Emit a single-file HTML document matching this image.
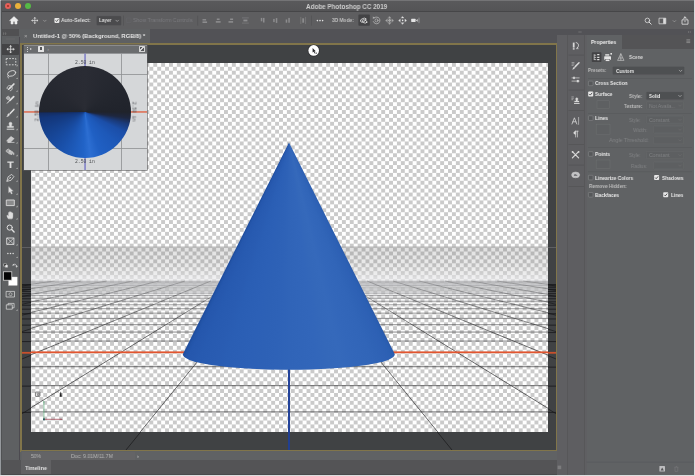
<!DOCTYPE html><html><head><meta charset="utf-8"><title>Adobe Photoshop CC 2019</title><style>
html,body{margin:0;padding:0;}
html{background:#d8d8da;}
body{width:695px;height:476px;overflow:hidden;background:#5e6062;font-family:"Liberation Sans", sans-serif;position:relative;filter:blur(0.5px);}
.a{position:absolute;}
.t{position:absolute;white-space:nowrap;color:#dcdcdc;font-size:6.2px;line-height:8px;will-change:transform;}
.b{font-weight:bold;}
.dim{color:#7a7a7c;}
</style></head><body>
<div class="a" style="left:0;top:0;width:695px;height:11.3px;background:linear-gradient(#5a5a5c,#545456);"></div>
<div class="a" style="left:0;top:0;width:695px;height:1px;background:#747476;"></div>
<div class="a" style="left:0;top:11.2px;width:695px;height:0.8px;background:#464648;"></div>
<div class="a" style="left:5.049999999999999px;top:2.6px;width:6.3px;height:6.3px;border-radius:50%;background:#e4605a;"></div>
<div class="a" style="left:14.950000000000001px;top:2.6px;width:6.3px;height:6.3px;border-radius:50%;background:#eab13a;"></div>
<div class="a" style="left:25.05px;top:2.6px;width:6.3px;height:6.3px;border-radius:50%;background:#56b846;"></div>
<div class="a" style="left:7.2px;top:4.75px;width:2px;height:2px;border-radius:50%;background:#9c2c20;"></div>
<div class="t" style="left:306.40px;top:3.10px;font-size:6.5px;color:#cecece;font-weight:bold;transform:scaleX(0.9733);transform-origin:0 50%;">Adobe Photoshop CC 2019</div>
<div class="a" style="left:0;top:12px;width:695px;height:16.8px;background:#5e5e60;"></div>
<svg class="a" style="left:0;top:0;" width="695" height="30" viewBox="0 0 695 30"><g transform="translate(14,20.4)" fill="none" stroke="#dadada" stroke-width="0.8" stroke-linecap="round" stroke-linejoin="round"><path d="M-4.2,0L0,-3.8L4.2,0H3V3.6H0.9V1.2H-0.9V3.6H-3V0Z" fill="#ececec" stroke="#ececec" stroke-width="0.5"/></g><g transform="translate(34.8,20.5)" fill="none" stroke="#dadada" stroke-width="0.8" stroke-linecap="round" stroke-linejoin="round"><path d="M0,-2.8V2.8M-2.8,0H2.8" stroke-width="0.7"/><path d="M-0.9,-2.3L0,-3.3L0.9,-2.3ZM-0.9,2.3L0,3.3L0.9,2.3ZM-2.3,-0.9L-3.3,0L-2.3,0.9ZM2.3,-0.9L3.3,0L2.3,0.9Z" fill="#dadada" stroke-width="0.25"/></g><g transform="translate(44.8,20.8)" fill="none" stroke="#b0b0b0" stroke-width="0.8" stroke-linecap="round" stroke-linejoin="round"><path d="M-1.3,-0.6L0,0.7L1.3,-0.6" stroke-width="0.6"/></g><rect x="54.4" y="17.9" width="5" height="5" rx="0.8" fill="#e6e6e6"/><path d="M55.5,20.4L56.6,21.5L58.4,19.2" stroke="#444" stroke-width="0.8" fill="none"/><rect x="96.6" y="16" width="24.6" height="9.2" rx="1" fill="#4b4b4d" stroke="#58585a" stroke-width="0.4"/><g transform="translate(117.2,20.8)" fill="none" stroke="#c8c8c8" stroke-width="0.8" stroke-linecap="round" stroke-linejoin="round"><path d="M-1.3,-0.6L0,0.7L1.3,-0.6" stroke-width="0.6"/></g><rect x="123.4" y="15.6" width="0.5" height="10" fill="#4c4c4e"/><rect x="197.6" y="15.6" width="0.5" height="10" fill="#4c4c4e"/><rect x="311.5" y="15.6" width="0.5" height="10" fill="#4c4c4e"/><rect x="126.4" y="18" width="4.6" height="4.6" rx="0.6" fill="none" stroke="#66666a" stroke-width="0.5"/><g transform="translate(204.7,20.5)" fill="none" stroke="#8c8c8e" stroke-width="0.8" stroke-linecap="round" stroke-linejoin="round"><rect x="-2.2" y="-1.4" width="3.6" height="1.4" fill="#8c8c8e" stroke="none"/><rect x="-2.2" y="0.9" width="4.6" height="1.6" fill="#8c8c8e" stroke="none"/></g><g transform="translate(218.2,20.5)" fill="none" stroke="#8c8c8e" stroke-width="0.8" stroke-linecap="round" stroke-linejoin="round"><rect x="-1.4" y="-2" width="2.8" height="1.5" fill="#8c8c8e" stroke="none"/><rect x="-2.4" y="0.6" width="4.8" height="1.6" fill="#8c8c8e" stroke="none"/></g><g transform="translate(230.9,20.5)" fill="none" stroke="#8c8c8e" stroke-width="0.8" stroke-linecap="round" stroke-linejoin="round"><rect x="-0.8" y="-2" width="3" height="1.5" fill="#8c8c8e" stroke="none"/><rect x="-2.4" y="0.6" width="4.6" height="1.6" fill="#8c8c8e" stroke="none"/></g><g transform="translate(245.4,20.5)" fill="none" stroke="#8c8c8e" stroke-width="0.8" stroke-linecap="round" stroke-linejoin="round"><path d="M-3,-2.6H3M-3,2.6H3" stroke-width="0.5"/><rect x="-2" y="-0.9" width="4" height="1.8" fill="#8c8c8e" stroke="none"/></g><g transform="translate(262,20.5)" fill="none" stroke="#8c8c8e" stroke-width="0.8" stroke-linecap="round" stroke-linejoin="round"><rect x="-1.2" y="-2.6" width="1.5" height="3.4" fill="#8c8c8e" stroke="none"/><rect x="1" y="-2.6" width="1.5" height="4.6" fill="#8c8c8e" stroke="none"/></g><g transform="translate(275.2,20.5)" fill="none" stroke="#8c8c8e" stroke-width="0.8" stroke-linecap="round" stroke-linejoin="round"><rect x="-2" y="-1.6" width="1.5" height="3.2" fill="#8c8c8e" stroke="none"/><rect x="0.6" y="-2.4" width="1.5" height="4.8" fill="#8c8c8e" stroke="none"/></g><g transform="translate(287.7,20.5)" fill="none" stroke="#8c8c8e" stroke-width="0.8" stroke-linecap="round" stroke-linejoin="round"><rect x="-2" y="-1" width="1.5" height="3.2" fill="#8c8c8e" stroke="none"/><rect x="0.6" y="-2.6" width="1.5" height="4.8" fill="#8c8c8e" stroke="none"/></g><g transform="translate(303.2,20.5)" fill="none" stroke="#8c8c8e" stroke-width="0.8" stroke-linecap="round" stroke-linejoin="round"><path d="M-2.4,-3.2V3.2M2.4,-3.2V3.2" stroke-width="0.5"/><rect x="-0.9" y="-2.2" width="1.8" height="4.4" fill="#8c8c8e" stroke="none"/></g><circle cx="317.4" cy="20.6" r="0.8" fill="#e0e0e0"/><circle cx="320" cy="20.6" r="0.8" fill="#e0e0e0"/><circle cx="322.6" cy="20.6" r="0.8" fill="#e0e0e0"/><rect x="358.4" y="14.6" width="11.4" height="11.2" rx="0.8" fill="#434345"/><g transform="translate(364,20.4)" fill="none" stroke="#e8e8e8" stroke-width="0.8" stroke-linecap="round" stroke-linejoin="round"><ellipse cx="-0.6" cy="-0.6" rx="3" ry="1.7" transform="rotate(-25)" stroke-width="0.7"/><ellipse cx="0.8" cy="0.8" rx="2.6" ry="1.5" transform="rotate(20)" stroke-width="0.7"/></g><g transform="translate(376.5,20.4)" fill="none" stroke="#c4c4c4" stroke-width="0.8" stroke-linecap="round" stroke-linejoin="round"><path d="M-2.2,-2.6A3.4,3.4 0 1 1 -3.2,1.2" stroke-width="0.7"/><circle cx="0" cy="0" r="1.5" stroke-width="0.6"/><path d="M-3.2,-3.6L-2,-2.4L-3.4,-1.9Z" fill="#c4c4c4" stroke-width="0.2"/></g><g transform="translate(389.6,20.4)" fill="none" stroke="#a8a8a8" stroke-width="0.8" stroke-linecap="round" stroke-linejoin="round"><path d="M0,-4L1.5,-2.2H-1.5ZM0,4L1.5,2.2H-1.5ZM-4,0L-2.2,-1.5V1.5ZM4,0L2.2,-1.5V1.5Z" fill="#a8a8a8" stroke="#a8a8a8" stroke-width="0.3"/><path d="M0,-1.8L1.8,0L0,1.8L-1.8,0Z" fill="#a8a8a8" stroke="none"/></g><g transform="translate(402.6,20.4)" fill="none" stroke="#e4e4e4" stroke-width="0.8" stroke-linecap="round" stroke-linejoin="round"><path d="M0,-3.9L1.3,-2.3H-1.3ZM0,3.9L1.3,2.3H-1.3ZM-3.9,0L-2.3,-1.3V1.3ZM3.9,0L2.3,-1.3V1.3Z" fill="#e4e4e4" stroke="#e4e4e4" stroke-width="0.3"/><circle cx="0" cy="0" r="0.8" fill="#e4e4e4" stroke="none"/></g><g transform="translate(414.6,20.4)" fill="none" stroke="#c0c0c0" stroke-width="0.8" stroke-linecap="round" stroke-linejoin="round"><rect x="-3.4" y="-1.6" width="4.4" height="3.2" rx="0.4" fill="#e4e4e4" stroke="none"/><path d="M1.4,0L3,-1.4V1.4Z" fill="#e4e4e4" stroke="none"/><path d="M4.4,-2.4V2.4" stroke-width="0.5" stroke-dasharray="0.8 0.6"/></g><g transform="translate(648,21)" fill="none" stroke="#dcdcdc" stroke-width="0.8" stroke-linecap="round" stroke-linejoin="round"><circle cx="-0.6" cy="-0.6" r="2.3" stroke-width="0.8"/><path d="M1.1,1.1L3.2,3.2" stroke-width="1"/></g><g transform="translate(662.6,21)" fill="none" stroke="#dcdcdc" stroke-width="0.8" stroke-linecap="round" stroke-linejoin="round"><rect x="-3.2" y="-2.8" width="6.4" height="5.6" stroke-width="0.7"/><rect x="0.6" y="-2.8" width="2.6" height="5.6" fill="#dcdcdc" stroke="none"/></g><g transform="translate(674.4,21.2)" fill="none" stroke="#b0b0b0" stroke-width="0.8" stroke-linecap="round" stroke-linejoin="round"><path d="M-1.3,-0.6L0,0.7L1.3,-0.6" stroke-width="0.6"/></g><g transform="translate(685,20.8)" fill="none" stroke="#e4e4e4" stroke-width="0.8" stroke-linecap="round" stroke-linejoin="round"><path d="M-1.4,-1H-3V3.4H3V-1H1.4" stroke-width="0.8"/><path d="M0,1V-3.8M-1.5,-2.5L0,-4L1.5,-2.5" stroke-width="0.8"/></g></svg>
<div class="t" style="left:61.40px;top:16.40px;font-size:6.0px;color:#dadada;font-weight:bold;transform:scaleX(0.8377);transform-origin:0 50%;">Auto-Select:</div>
<div class="t" style="left:98.60px;top:16.40px;font-size:5.8px;color:#dadada;font-weight:bold;transform:scaleX(0.8012);transform-origin:0 50%;">Layer</div>
<div class="t" style="left:133.00px;top:16.40px;font-size:6.0px;color:#7a7a7e;transform:scaleX(0.8790);transform-origin:0 50%;">Show Transform Controls</div>
<div class="t" style="left:331.90px;top:16.30px;font-size:5.8px;color:#c0c0c0;font-weight:bold;transform:scaleX(0.8314);transform-origin:0 50%;">3D Mode:</div>
<div class="a" style="left:0;top:28.8px;width:695px;height:14.4px;background:#525256;"></div>
<div class="a" style="left:21px;top:29.4px;width:129.3px;height:13.8px;background:#5e6062;"></div>
<div class="t" style="left:33.20px;top:32.20px;font-size:6.1px;color:#e4e4e4;font-weight:bold;transform:scaleX(0.9580);transform-origin:0 50%;">Untitled-1 @ 50% (Background, RGB/8) *</div>
<div class="t" style="left:24px;top:32px;font-size:6px;color:#a8a8a8;">&times;</div>
<div class="a" style="left:0;top:28.8px;width:21px;height:448px;background:#5e6062;"></div>
<div class="a" style="left:0;top:28.8px;width:19.4px;height:7.4px;background:#505052;"></div>
<div class="a" style="left:0.8px;top:43.8px;width:18.4px;height:11.6px;background:#444446;border-radius:1px;"></div>
<div class="a" style="left:19.4px;top:36.6px;width:1px;height:440px;background:#4c4a50;"></div>
<svg class="a" style="left:0;top:0;" width="22" height="476" viewBox="0 0 22 476"><g transform="translate(10.6,49.2) scale(1.0)" fill="none" stroke="#dedede" stroke-width="0.9" stroke-linecap="round" stroke-linejoin="round"><path d="M0,-3.2V3.2M-3.2,0H3.2" stroke-width="0.8"/><path d="M-1,-2.7L0,-3.9L1,-2.7ZM-1,2.7L0,3.9L1,2.7ZM-2.7,-1L-3.9,0L-2.7,1ZM2.7,-1L3.9,0L2.7,1Z" fill="#dedede" stroke-width="0.3"/></g><g transform="translate(11.0,61.7) scale(1.0)" fill="none" stroke="#dedede" stroke-width="0.9" stroke-linecap="round" stroke-linejoin="round"><rect x="-4.8" y="-3.1" width="9.6" height="6.2" stroke-dasharray="1.7 1.3" stroke-width="0.9" stroke-linecap="butt"/></g><g transform="translate(11.3,74.4) scale(1.0)" fill="none" stroke="#dedede" stroke-width="0.9" stroke-linecap="round" stroke-linejoin="round"><ellipse cx="0.6" cy="-0.8" rx="4.2" ry="2.6" transform="rotate(-18)" stroke-width="0.8"/><path d="M-3,0.8C-4,1.8 -3.6,3.2 -2.6,3.8" stroke-width="0.8"/></g><g transform="translate(10.5,87.4) scale(1.0)" fill="none" stroke="#dedede" stroke-width="0.9" stroke-linecap="round" stroke-linejoin="round"><path d="M-3.4,1.2A2.6,2.6 0 1 1 -1,3.4" stroke-dasharray="1.2 0.9" stroke-width="0.8"/><path d="M-1.2,1.2L3.4,-3.4" stroke-width="1.7"/><path d="M-2.4,2.4L-1.2,1.2" stroke-width="1"/></g><g transform="translate(10.5,99.8) scale(1.0)" fill="none" stroke="#dedede" stroke-width="0.9" stroke-linecap="round" stroke-linejoin="round"><path d="M-0.6,0.6L3.2,-3.2" stroke-width="1.8"/><path d="M-3.2,3.4L-1,1" stroke-width="1"/><path d="M-3.8,-2.6L-2.2,-3.6L-0.8,-2.6V-1L-2.2,0L-3.8,-1Z" stroke-width="0.6" fill="#dedede" fill-opacity="0.6"/></g><g transform="translate(10.5,113) scale(1.0)" fill="none" stroke="#dedede" stroke-width="0.9" stroke-linecap="round" stroke-linejoin="round"><path d="M-0.4,0.4L3.4,-3.6" stroke-width="1.5"/><path d="M-3.4,3.6C-2.8,3.6 -1.2,3 -0.9,1.6C-0.9,0.8 -1.6,0.4 -2.2,0.8C-3,1.4 -2.6,2.8 -3.4,3.6Z" fill="#dedede" stroke-width="0.4"/></g><g transform="translate(10.5,125.8) scale(1.0)" fill="none" stroke="#dedede" stroke-width="0.9" stroke-linecap="round" stroke-linejoin="round"><path d="M-3.4,3.4H3.4" stroke-width="1"/><path d="M-3,1.6H3V0.4H1V-0.8C1.8,-1.4 1.8,-3.6 0,-3.6C-1.8,-3.6 -1.8,-1.4 -1,-0.8V0.4H-3Z" fill="#dedede" stroke-width="0.4"/></g><g transform="translate(10.5,139.2) scale(1.0)" fill="none" stroke="#dedede" stroke-width="0.9" stroke-linecap="round" stroke-linejoin="round"><path d="M-3.6,1.4L0.4,-2.8L3.6,-0.6L0,3H-2.4Z" fill="#dedede" fill-opacity="0.85" stroke-width="0.5"/><path d="M-2.6,3.2H3.6" stroke-width="0.7"/></g><g transform="translate(10.5,151.8) scale(1.0)" fill="none" stroke="#dedede" stroke-width="0.9" stroke-linecap="round" stroke-linejoin="round"><path d="M-4,-1.6L-2.2,-2.8L-0.6,-1.6V0L-2.2,1L-4,0Z" stroke-width="0.6" fill="#dedede" fill-opacity="0.5"/><path d="M-0.4,-1.4L2.4,0.2L1.4,2.8L-1.4,2Z" fill="#dedede" fill-opacity="0.75" stroke-width="0.6"/><path d="M3.2,1C3.9,2 3.9,2.8 3.2,3C2.5,2.8 2.5,2 3.2,1Z" fill="#dedede" stroke-width="0.3"/></g><g transform="translate(10.5,164.6) scale(1.0)" fill="none" stroke="#dedede" stroke-width="0.9" stroke-linecap="round" stroke-linejoin="round"><path d="M-3.2,-3.2H3.2V-1.8H0.9V3.4H-0.9V-1.8H-3.2Z" fill="#dedede" stroke="none"/></g><g transform="translate(10.5,177.4) scale(1.0)" fill="none" stroke="#dedede" stroke-width="0.9" stroke-linecap="round" stroke-linejoin="round"><path d="M-3.6,3.6L-2.4,-0.6L1.2,-3L3.4,-0.8L0.8,2.6Z" stroke-width="0.8"/><path d="M-3.4,3.4L-0.6,0.6" stroke-width="0.6"/><circle cx="-0.2" cy="0.2" r="0.7" fill="#dedede" stroke="none"/></g><g transform="translate(10.5,190.4) scale(1.0)" fill="none" stroke="#dedede" stroke-width="0.9" stroke-linecap="round" stroke-linejoin="round"><path d="M-1.8,-3.6V2.4L-0.4,1.2L0.8,3.6L1.8,3.1L0.7,0.8L2.4,0.6Z" fill="#dedede" stroke-width="0.3"/></g><g transform="translate(10.5,202.8) scale(1.0)" fill="none" stroke="#dedede" stroke-width="0.9" stroke-linecap="round" stroke-linejoin="round"><rect x="-3.8" y="-2.8" width="7.6" height="5.6" fill="#dedede" fill-opacity="0.35" stroke-width="0.9"/></g><g transform="translate(10.5,215.2) scale(1.0)" fill="none" stroke="#dedede" stroke-width="0.9" stroke-linecap="round" stroke-linejoin="round"><path d="M-2.2,3.6C-3,2.4 -3.8,1 -3.6,0.2C-3,-0.2 -2.4,0.4 -2,1V-2.4C-2,-3.2 -1,-3.2 -1,-2.4V-3.2C-1,-4 0,-4 0,-3.2V-2.8C0.2,-3.6 1.2,-3.4 1.2,-2.6V-2C1.4,-2.6 2.4,-2.4 2.4,-1.6V1.2C2.4,2.4 2,3 1.6,3.6Z" fill="#dedede" stroke-width="0.3"/></g><g transform="translate(10.5,228.4) scale(1.0)" fill="none" stroke="#dedede" stroke-width="0.9" stroke-linecap="round" stroke-linejoin="round"><circle cx="-0.8" cy="-0.8" r="2.6" stroke-width="1"/><path d="M1.2,1.2L3.6,3.6" stroke-width="1.4"/></g><g transform="translate(10.5,241.2) scale(1.0)" fill="none" stroke="#dedede" stroke-width="0.9" stroke-linecap="round" stroke-linejoin="round"><rect x="-3.4" y="-3.2" width="6.8" height="6.4" stroke-width="0.9"/><path d="M-3.4,-3.2L3.4,3.2M3.4,-3.2L-3.4,3.2" stroke-width="0.7"/></g><g transform="translate(10.5,253.6) scale(1.0)" fill="none" stroke="#dedede" stroke-width="0.9" stroke-linecap="round" stroke-linejoin="round"><circle cx="-2.6" cy="0" r="0.75" fill="#dedede" stroke="none"/><circle cx="0" cy="0" r="0.75" fill="#dedede" stroke="none"/><circle cx="2.6" cy="0" r="0.75" fill="#dedede" stroke="none"/></g><g transform="translate(5.7,265.4) scale(1.0)" fill="none" stroke="#dedede" stroke-width="0.9" stroke-linecap="round" stroke-linejoin="round"><rect x="-1.6" y="-1.6" width="2.4" height="2.4" fill="#111" stroke="#e8e8e8" stroke-width="0.5"/><rect x="-0.4" y="-0.4" width="2.4" height="2.4" fill="#f4f4f4" stroke="#999" stroke-width="0.3"/></g><g transform="translate(15.1,265.6) scale(1.0)" fill="none" stroke="#dedede" stroke-width="0.9" stroke-linecap="round" stroke-linejoin="round"><path d="M-1.8,-0.8C-0.6,-2 1.2,-1.6 1.6,0.6" stroke-width="0.7"/><path d="M-2.6,-0.2L-1.9,-1.6L-0.7,-0.6Z M0.8,0.2L2.4,0.4L1.6,1.8Z" fill="#dedede" stroke-width="0.2"/></g><rect x="8.6" y="277" width="8.6" height="8.4" fill="#ffffff" stroke="#d0d0d0" stroke-width="0.4"/><rect x="3.4" y="271.8" width="8.4" height="8.4" fill="#050505" stroke="#e8e8e8" stroke-width="0.7"/><g transform="translate(10.5,294.2) scale(1.0)" fill="none" stroke="#dedede" stroke-width="0.9" stroke-linecap="round" stroke-linejoin="round"><rect x="-4" y="-2.8" width="8" height="5.6" stroke-width="0.7"/><circle cx="0" cy="0" r="1.5" stroke-dasharray="0.8 0.6" stroke-width="0.6"/></g><g transform="translate(10.5,306.4) scale(1.0)" fill="none" stroke="#dedede" stroke-width="0.9" stroke-linecap="round" stroke-linejoin="round"><rect x="-3.8" y="-1.6" width="5.6" height="4.4" stroke-width="0.7"/><path d="M-2.4,-1.6V-3H3.6V1.4H1.8" stroke-width="0.7"/></g>
<path d="M17.6,66.2H16L17.6,64.6Z" fill="#b8b8b8"/>
<path d="M17.6,79.0H16L17.6,77.39999999999999Z" fill="#b8b8b8"/>
<path d="M17.6,91.80000000000001H16L17.6,90.2Z" fill="#b8b8b8"/>
<path d="M17.6,104.2H16L17.6,102.6Z" fill="#b8b8b8"/>
<path d="M17.6,117.4H16L17.6,115.8Z" fill="#b8b8b8"/>
<path d="M17.6,130.2H16L17.6,128.6Z" fill="#b8b8b8"/>
<path d="M17.6,143.6H16L17.6,142.0Z" fill="#b8b8b8"/>
<path d="M17.6,156.20000000000002H16L17.6,154.60000000000002Z" fill="#b8b8b8"/>
<path d="M17.6,169.0H16L17.6,167.4Z" fill="#b8b8b8"/>
<path d="M17.6,181.8H16L17.6,180.20000000000002Z" fill="#b8b8b8"/>
<path d="M17.6,194.8H16L17.6,193.20000000000002Z" fill="#b8b8b8"/>
<path d="M17.6,207.20000000000002H16L17.6,205.60000000000002Z" fill="#b8b8b8"/>
<path d="M17.6,219.6H16L17.6,218.0Z" fill="#b8b8b8"/>
<path d="M17.6,245.6H16L17.6,244.0Z" fill="#b8b8b8"/>
<path d="M17.6,258.0H16L17.6,256.4Z" fill="#b8b8b8"/>
<path d="M17.6,310.79999999999995H16L17.6,309.2Z" fill="#b8b8b8"/>
<path d="M3,32.6L4.2,33.6L3,34.6M5,32.6L6.2,33.6L5,34.6" stroke="#9a9a9a" stroke-width="0.5" fill="none"/>
<rect x="6" y="38.6" width="9" height="0.8" fill="#6a6a6c"/>
</svg>
<div class="a" style="left:20.4px;top:42.6px;width:537.2px;height:408.6px;background:#404244;"></div>
<div class="a" style="left:19.8px;top:42.6px;width:538px;height:409px;border:2.3px solid #81754a;box-sizing:border-box;"></div>
<svg class="a" style="left:22px;top:44.5px;" width="534" height="405.5" viewBox="22 44.5 534 405.5"><rect x="22" y="246.6" width="534" height="0.8" fill="#77777a" fill-opacity="0.7"/><rect x="22" y="283.51" width="534" height="1" fill="#161618" fill-opacity="0.75"/><rect x="22" y="285.02" width="534" height="1" fill="#161618" fill-opacity="0.75"/><rect x="22" y="286.67" width="534" height="1" fill="#161618" fill-opacity="0.75"/><rect x="22" y="288.47" width="534" height="1" fill="#161618" fill-opacity="0.75"/><rect x="22" y="290.45" width="534" height="1" fill="#161618" fill-opacity="0.75"/><rect x="22" y="292.63" width="534" height="1" fill="#161618" fill-opacity="0.75"/><rect x="22" y="295.05" width="534" height="1" fill="#161618" fill-opacity="0.75"/><rect x="22" y="297.76" width="534" height="1" fill="#161618" fill-opacity="0.75"/><rect x="22" y="300.80" width="534" height="1" fill="#161618" fill-opacity="0.75"/><rect x="22" y="304.24" width="534" height="1" fill="#161618" fill-opacity="0.75"/><rect x="22" y="308.17" width="534" height="1" fill="#161618" fill-opacity="0.75"/><rect x="22" y="312.68" width="534" height="1" fill="#161618" fill-opacity="0.75"/><rect x="22" y="317.94" width="534" height="1" fill="#161618" fill-opacity="0.75"/><rect x="22" y="324.14" width="534" height="1" fill="#161618" fill-opacity="0.75"/><rect x="22" y="331.56" width="534" height="1" fill="#161618" fill-opacity="0.75"/><rect x="22" y="340.58" width="534" height="1" fill="#161618" fill-opacity="0.75"/><rect x="22" y="351.81" width="534" height="1" fill="#161618" fill-opacity="0"/><rect x="22" y="366.15" width="534" height="1" fill="#161618" fill-opacity="0.75"/><rect x="22" y="385.11" width="534" height="1" fill="#161618" fill-opacity="0.75"/><rect x="22" y="411.37" width="534" height="1" fill="#161618" fill-opacity="0.75"/><rect x="22" y="351.4" width="534" height="1.8" fill="#c8502c"/><line x1="-47.58" y1="283.5" x2="-1671.96" y2="450" stroke="#161618" stroke-width="0.9" stroke-opacity="0.75"/><line x1="-19.53" y1="283.5" x2="-1508.54" y2="450" stroke="#161618" stroke-width="0.9" stroke-opacity="0.75"/><line x1="8.52" y1="283.5" x2="-1345.13" y2="450" stroke="#161618" stroke-width="0.9" stroke-opacity="0.75"/><line x1="36.56" y1="283.5" x2="-1181.72" y2="450" stroke="#161618" stroke-width="0.9" stroke-opacity="0.75"/><line x1="64.61" y1="283.5" x2="-1018.30" y2="450" stroke="#161618" stroke-width="0.9" stroke-opacity="0.75"/><line x1="92.66" y1="283.5" x2="-854.89" y2="450" stroke="#161618" stroke-width="0.9" stroke-opacity="0.75"/><line x1="120.71" y1="283.5" x2="-691.48" y2="450" stroke="#161618" stroke-width="0.9" stroke-opacity="0.75"/><line x1="148.76" y1="283.5" x2="-528.06" y2="450" stroke="#161618" stroke-width="0.9" stroke-opacity="0.75"/><line x1="176.81" y1="283.5" x2="-364.65" y2="450" stroke="#161618" stroke-width="0.9" stroke-opacity="0.75"/><line x1="204.85" y1="283.5" x2="-201.24" y2="450" stroke="#161618" stroke-width="0.9" stroke-opacity="0.75"/><line x1="232.90" y1="283.5" x2="-37.83" y2="450" stroke="#161618" stroke-width="0.9" stroke-opacity="0.75"/><line x1="260.95" y1="283.5" x2="125.59" y2="450" stroke="#161618" stroke-width="0.9" stroke-opacity="0.75"/><line x1="317.05" y1="283.5" x2="452.41" y2="450" stroke="#161618" stroke-width="0.9" stroke-opacity="0.75"/><line x1="345.10" y1="283.5" x2="615.83" y2="450" stroke="#161618" stroke-width="0.9" stroke-opacity="0.75"/><line x1="373.15" y1="283.5" x2="779.24" y2="450" stroke="#161618" stroke-width="0.9" stroke-opacity="0.75"/><line x1="401.19" y1="283.5" x2="942.65" y2="450" stroke="#161618" stroke-width="0.9" stroke-opacity="0.75"/><line x1="429.24" y1="283.5" x2="1106.07" y2="450" stroke="#161618" stroke-width="0.9" stroke-opacity="0.75"/><line x1="457.29" y1="283.5" x2="1269.48" y2="450" stroke="#161618" stroke-width="0.9" stroke-opacity="0.75"/><line x1="485.34" y1="283.5" x2="1432.89" y2="450" stroke="#161618" stroke-width="0.9" stroke-opacity="0.75"/><line x1="513.39" y1="283.5" x2="1596.30" y2="450" stroke="#161618" stroke-width="0.9" stroke-opacity="0.75"/><line x1="541.44" y1="283.5" x2="1759.72" y2="450" stroke="#161618" stroke-width="0.9" stroke-opacity="0.75"/><line x1="569.48" y1="283.5" x2="1923.13" y2="450" stroke="#161618" stroke-width="0.9" stroke-opacity="0.75"/><line x1="597.53" y1="283.5" x2="2086.54" y2="450" stroke="#161618" stroke-width="0.9" stroke-opacity="0.75"/><line x1="625.58" y1="283.5" x2="2249.96" y2="450" stroke="#161618" stroke-width="0.9" stroke-opacity="0.75"/></svg>
<div class="a" id="canvas" style="left:30.5px;top:62.5px;width:517.5px;height:369.0px;overflow:hidden;background:#fff;">
<svg class="a" style="left:-30.5px;top:-62.5px;" width="695" height="476" viewBox="0 0 695 476">
<defs><pattern id="ck" x="0" y="0" width="7.86" height="7.86" patternUnits="userSpaceOnUse"><rect x="0" y="3.93" width="3.93" height="3.93" fill="#cacaca"/><rect x="3.93" y="0" width="3.93" height="3.93" fill="#cacaca"/></pattern>
<linearGradient id="fog" x1="0" y1="0" x2="0" y2="1"><stop offset="0" stop-color="#404040" stop-opacity="0.16"/><stop offset="0.35" stop-color="#686868" stop-opacity="0.15"/><stop offset="0.58" stop-color="#c0c0c0" stop-opacity="0.28"/><stop offset="0.8" stop-color="#e6e6e8" stop-opacity="0.6"/><stop offset="1" stop-color="#ecedef" stop-opacity="0.9"/></linearGradient>
<linearGradient id="fog2" x1="0" y1="0" x2="0" y2="1"><stop offset="0" stop-color="#ecedef" stop-opacity="0.9"/><stop offset="0.4" stop-color="#ecedef" stop-opacity="0.5"/><stop offset="1" stop-color="#f0f0f0" stop-opacity="0"/></linearGradient>
<linearGradient id="cone" x1="0" y1="0" x2="1" y2="0"><stop offset="0" stop-color="#2152a4"/><stop offset="0.1" stop-color="#2759ac"/><stop offset="0.4" stop-color="#2e61b3"/><stop offset="0.62" stop-color="#3668ba"/><stop offset="0.85" stop-color="#3064b6"/><stop offset="1" stop-color="#2a5db0"/></linearGradient>
</defs>
<rect x="0" y="0" width="695" height="476" fill="url(#ck)"/>
<rect x="0" y="247" width="695" height="38" fill="url(#fog)"/>
<rect x="0" y="285" width="695" height="20" fill="url(#fog2)"/>
<rect x="0" y="246.6" width="695" height="0.8" fill="#a8a8a8"/>
<rect x="0" y="280.74" width="695" height="1.2" fill="#2c2c2e" fill-opacity="0.25"/>
<rect x="0" y="282.02" width="695" height="1.2" fill="#2c2c2e" fill-opacity="0.26"/>
<rect x="0" y="283.41" width="695" height="1.2" fill="#2c2c2e" fill-opacity="0.27"/>
<rect x="0" y="284.92" width="695" height="1.2" fill="#2c2c2e" fill-opacity="0.28"/>
<rect x="0" y="286.57" width="695" height="1.2" fill="#2c2c2e" fill-opacity="0.29"/>
<rect x="0" y="288.37" width="695" height="1.2" fill="#2c2c2e" fill-opacity="0.30"/>
<rect x="0" y="290.35" width="695" height="1.2" fill="#2c2c2e" fill-opacity="0.31"/>
<rect x="0" y="292.53" width="695" height="1.2" fill="#2c2c2e" fill-opacity="0.33"/>
<rect x="0" y="294.95" width="695" height="1.2" fill="#2c2c2e" fill-opacity="0.34"/>
<rect x="0" y="297.66" width="695" height="1.2" fill="#2c2c2e" fill-opacity="0.35"/>
<rect x="0" y="300.70" width="695" height="1.2" fill="#2c2c2e" fill-opacity="0.36"/>
<rect x="0" y="304.14" width="695" height="1.2" fill="#2c2c2e" fill-opacity="0.37"/>
<rect x="0" y="308.07" width="695" height="1.2" fill="#2c2c2e" fill-opacity="0.39"/>
<rect x="0" y="312.58" width="695" height="1.2" fill="#2c2c2e" fill-opacity="0.40"/>
<rect x="0" y="317.84" width="695" height="1.2" fill="#2c2c2e" fill-opacity="0.42"/>
<rect x="0" y="324.04" width="695" height="1.2" fill="#2c2c2e" fill-opacity="0.44"/>
<rect x="0" y="331.46" width="695" height="1.2" fill="#2c2c2e" fill-opacity="0.46"/>
<rect x="0" y="340.48" width="695" height="1.2" fill="#2c2c2e" fill-opacity="0.48"/>
<rect x="0" y="366.05" width="695" height="1.2" fill="#2c2c2e" fill-opacity="0.55"/>
<rect x="0" y="385.01" width="695" height="1.2" fill="#2c2c2e" fill-opacity="0.56"/>
<rect x="0" y="411.27" width="695" height="1.2" fill="#2c2c2e" fill-opacity="0.56"/>
<line x1="2.82" y1="281" x2="-15.06" y2="283" stroke="#2c2c2e" stroke-width="0.9" stroke-opacity="0.27"/>
<line x1="28.84" y1="281" x2="12.58" y2="283" stroke="#2c2c2e" stroke-width="0.9" stroke-opacity="0.27"/>
<line x1="12.58" y1="283" x2="-7.74" y2="285.5" stroke="#2c2c2e" stroke-width="0.9" stroke-opacity="0.31"/>
<line x1="54.86" y1="281" x2="40.22" y2="283" stroke="#2c2c2e" stroke-width="0.9" stroke-opacity="0.27"/>
<line x1="40.22" y1="283" x2="21.93" y2="285.5" stroke="#2c2c2e" stroke-width="0.9" stroke-opacity="0.31"/>
<line x1="21.93" y1="285.5" x2="3.64" y2="288" stroke="#2c2c2e" stroke-width="0.9" stroke-opacity="0.35"/>
<line x1="3.64" y1="288" x2="-32.95" y2="293" stroke="#2c2c2e" stroke-width="0.9" stroke-opacity="0.39"/>
<line x1="80.87" y1="281" x2="67.86" y2="283" stroke="#2c2c2e" stroke-width="0.9" stroke-opacity="0.27"/>
<line x1="67.86" y1="283" x2="51.60" y2="285.5" stroke="#2c2c2e" stroke-width="0.9" stroke-opacity="0.31"/>
<line x1="51.60" y1="285.5" x2="35.34" y2="288" stroke="#2c2c2e" stroke-width="0.9" stroke-opacity="0.35"/>
<line x1="35.34" y1="288" x2="2.82" y2="293" stroke="#2c2c2e" stroke-width="0.9" stroke-opacity="0.39"/>
<line x1="2.82" y1="293" x2="-36.20" y2="299" stroke="#2c2c2e" stroke-width="0.9" stroke-opacity="0.45"/>
<line x1="106.89" y1="281" x2="95.51" y2="283" stroke="#2c2c2e" stroke-width="0.9" stroke-opacity="0.27"/>
<line x1="95.51" y1="283" x2="81.28" y2="285.5" stroke="#2c2c2e" stroke-width="0.9" stroke-opacity="0.31"/>
<line x1="81.28" y1="285.5" x2="67.05" y2="288" stroke="#2c2c2e" stroke-width="0.9" stroke-opacity="0.35"/>
<line x1="67.05" y1="288" x2="38.60" y2="293" stroke="#2c2c2e" stroke-width="0.9" stroke-opacity="0.39"/>
<line x1="38.60" y1="293" x2="4.45" y2="299" stroke="#2c2c2e" stroke-width="0.9" stroke-opacity="0.45"/>
<line x1="4.45" y1="299" x2="-35.39" y2="306" stroke="#2c2c2e" stroke-width="0.9" stroke-opacity="0.51"/>
<line x1="132.90" y1="281" x2="123.15" y2="283" stroke="#2c2c2e" stroke-width="0.9" stroke-opacity="0.27"/>
<line x1="123.15" y1="283" x2="110.95" y2="285.5" stroke="#2c2c2e" stroke-width="0.9" stroke-opacity="0.31"/>
<line x1="110.95" y1="285.5" x2="98.76" y2="288" stroke="#2c2c2e" stroke-width="0.9" stroke-opacity="0.35"/>
<line x1="98.76" y1="288" x2="74.37" y2="293" stroke="#2c2c2e" stroke-width="0.9" stroke-opacity="0.39"/>
<line x1="74.37" y1="293" x2="45.10" y2="299" stroke="#2c2c2e" stroke-width="0.9" stroke-opacity="0.45"/>
<line x1="45.10" y1="299" x2="10.95" y2="306" stroke="#2c2c2e" stroke-width="0.9" stroke-opacity="0.51"/>
<line x1="10.95" y1="306" x2="-28.07" y2="314" stroke="#2c2c2e" stroke-width="0.9" stroke-opacity="0.58"/>
<line x1="158.92" y1="281" x2="150.79" y2="283" stroke="#2c2c2e" stroke-width="0.9" stroke-opacity="0.27"/>
<line x1="150.79" y1="283" x2="140.63" y2="285.5" stroke="#2c2c2e" stroke-width="0.9" stroke-opacity="0.31"/>
<line x1="140.63" y1="285.5" x2="130.47" y2="288" stroke="#2c2c2e" stroke-width="0.9" stroke-opacity="0.35"/>
<line x1="130.47" y1="288" x2="110.14" y2="293" stroke="#2c2c2e" stroke-width="0.9" stroke-opacity="0.39"/>
<line x1="110.14" y1="293" x2="85.75" y2="299" stroke="#2c2c2e" stroke-width="0.9" stroke-opacity="0.45"/>
<line x1="85.75" y1="299" x2="57.30" y2="306" stroke="#2c2c2e" stroke-width="0.9" stroke-opacity="0.51"/>
<line x1="57.30" y1="306" x2="24.78" y2="314" stroke="#2c2c2e" stroke-width="0.9" stroke-opacity="0.58"/>
<line x1="24.78" y1="314" x2="-11.81" y2="323" stroke="#2c2c2e" stroke-width="0.9" stroke-opacity="0.64"/>
<line x1="184.94" y1="281" x2="178.43" y2="283" stroke="#2c2c2e" stroke-width="0.9" stroke-opacity="0.27"/>
<line x1="178.43" y1="283" x2="170.30" y2="285.5" stroke="#2c2c2e" stroke-width="0.9" stroke-opacity="0.31"/>
<line x1="170.30" y1="285.5" x2="162.17" y2="288" stroke="#2c2c2e" stroke-width="0.9" stroke-opacity="0.35"/>
<line x1="162.17" y1="288" x2="145.91" y2="293" stroke="#2c2c2e" stroke-width="0.9" stroke-opacity="0.39"/>
<line x1="145.91" y1="293" x2="126.40" y2="299" stroke="#2c2c2e" stroke-width="0.9" stroke-opacity="0.45"/>
<line x1="126.40" y1="299" x2="103.64" y2="306" stroke="#2c2c2e" stroke-width="0.9" stroke-opacity="0.51"/>
<line x1="103.64" y1="306" x2="77.62" y2="314" stroke="#2c2c2e" stroke-width="0.9" stroke-opacity="0.58"/>
<line x1="77.62" y1="314" x2="48.35" y2="323" stroke="#2c2c2e" stroke-width="0.9" stroke-opacity="0.64"/>
<line x1="48.35" y1="323" x2="15.83" y2="333" stroke="#2c2c2e" stroke-width="0.9" stroke-opacity="0.71"/>
<line x1="15.83" y1="333" x2="-332.13" y2="440" stroke="#2c2c2e" stroke-width="0.9" stroke-opacity="0.78"/>
<line x1="210.95" y1="281" x2="206.07" y2="283" stroke="#2c2c2e" stroke-width="0.9" stroke-opacity="0.27"/>
<line x1="206.07" y1="283" x2="199.98" y2="285.5" stroke="#2c2c2e" stroke-width="0.9" stroke-opacity="0.31"/>
<line x1="199.98" y1="285.5" x2="193.88" y2="288" stroke="#2c2c2e" stroke-width="0.9" stroke-opacity="0.35"/>
<line x1="193.88" y1="288" x2="181.68" y2="293" stroke="#2c2c2e" stroke-width="0.9" stroke-opacity="0.39"/>
<line x1="181.68" y1="293" x2="167.05" y2="299" stroke="#2c2c2e" stroke-width="0.9" stroke-opacity="0.45"/>
<line x1="167.05" y1="299" x2="149.98" y2="306" stroke="#2c2c2e" stroke-width="0.9" stroke-opacity="0.51"/>
<line x1="149.98" y1="306" x2="130.47" y2="314" stroke="#2c2c2e" stroke-width="0.9" stroke-opacity="0.58"/>
<line x1="130.47" y1="314" x2="108.51" y2="323" stroke="#2c2c2e" stroke-width="0.9" stroke-opacity="0.64"/>
<line x1="108.51" y1="323" x2="84.12" y2="333" stroke="#2c2c2e" stroke-width="0.9" stroke-opacity="0.71"/>
<line x1="84.12" y1="333" x2="-176.85" y2="440" stroke="#2c2c2e" stroke-width="0.9" stroke-opacity="0.78"/>
<line x1="236.97" y1="281" x2="233.72" y2="283" stroke="#2c2c2e" stroke-width="0.9" stroke-opacity="0.27"/>
<line x1="233.72" y1="283" x2="229.65" y2="285.5" stroke="#2c2c2e" stroke-width="0.9" stroke-opacity="0.31"/>
<line x1="229.65" y1="285.5" x2="225.59" y2="288" stroke="#2c2c2e" stroke-width="0.9" stroke-opacity="0.35"/>
<line x1="225.59" y1="288" x2="217.46" y2="293" stroke="#2c2c2e" stroke-width="0.9" stroke-opacity="0.39"/>
<line x1="217.46" y1="293" x2="207.70" y2="299" stroke="#2c2c2e" stroke-width="0.9" stroke-opacity="0.45"/>
<line x1="207.70" y1="299" x2="196.32" y2="306" stroke="#2c2c2e" stroke-width="0.9" stroke-opacity="0.51"/>
<line x1="196.32" y1="306" x2="183.31" y2="314" stroke="#2c2c2e" stroke-width="0.9" stroke-opacity="0.58"/>
<line x1="183.31" y1="314" x2="168.68" y2="323" stroke="#2c2c2e" stroke-width="0.9" stroke-opacity="0.64"/>
<line x1="168.68" y1="323" x2="152.42" y2="333" stroke="#2c2c2e" stroke-width="0.9" stroke-opacity="0.71"/>
<line x1="152.42" y1="333" x2="-21.57" y2="440" stroke="#2c2c2e" stroke-width="0.9" stroke-opacity="0.78"/>
<line x1="262.98" y1="281" x2="261.36" y2="283" stroke="#2c2c2e" stroke-width="0.9" stroke-opacity="0.27"/>
<line x1="261.36" y1="283" x2="259.33" y2="285.5" stroke="#2c2c2e" stroke-width="0.9" stroke-opacity="0.31"/>
<line x1="259.33" y1="285.5" x2="257.29" y2="288" stroke="#2c2c2e" stroke-width="0.9" stroke-opacity="0.35"/>
<line x1="257.29" y1="288" x2="253.23" y2="293" stroke="#2c2c2e" stroke-width="0.9" stroke-opacity="0.39"/>
<line x1="253.23" y1="293" x2="248.35" y2="299" stroke="#2c2c2e" stroke-width="0.9" stroke-opacity="0.45"/>
<line x1="248.35" y1="299" x2="242.66" y2="306" stroke="#2c2c2e" stroke-width="0.9" stroke-opacity="0.51"/>
<line x1="242.66" y1="306" x2="236.16" y2="314" stroke="#2c2c2e" stroke-width="0.9" stroke-opacity="0.58"/>
<line x1="236.16" y1="314" x2="228.84" y2="323" stroke="#2c2c2e" stroke-width="0.9" stroke-opacity="0.64"/>
<line x1="228.84" y1="323" x2="220.71" y2="333" stroke="#2c2c2e" stroke-width="0.9" stroke-opacity="0.71"/>
<line x1="220.71" y1="333" x2="133.72" y2="440" stroke="#2c2c2e" stroke-width="0.9" stroke-opacity="0.78"/>
<line x1="315.02" y1="281" x2="316.64" y2="283" stroke="#2c2c2e" stroke-width="0.9" stroke-opacity="0.27"/>
<line x1="316.64" y1="283" x2="318.67" y2="285.5" stroke="#2c2c2e" stroke-width="0.9" stroke-opacity="0.31"/>
<line x1="318.67" y1="285.5" x2="320.71" y2="288" stroke="#2c2c2e" stroke-width="0.9" stroke-opacity="0.35"/>
<line x1="320.71" y1="288" x2="324.77" y2="293" stroke="#2c2c2e" stroke-width="0.9" stroke-opacity="0.39"/>
<line x1="324.77" y1="293" x2="329.65" y2="299" stroke="#2c2c2e" stroke-width="0.9" stroke-opacity="0.45"/>
<line x1="329.65" y1="299" x2="335.34" y2="306" stroke="#2c2c2e" stroke-width="0.9" stroke-opacity="0.51"/>
<line x1="335.34" y1="306" x2="341.85" y2="314" stroke="#2c2c2e" stroke-width="0.9" stroke-opacity="0.58"/>
<line x1="341.85" y1="314" x2="349.16" y2="323" stroke="#2c2c2e" stroke-width="0.9" stroke-opacity="0.64"/>
<line x1="349.16" y1="323" x2="357.29" y2="333" stroke="#2c2c2e" stroke-width="0.9" stroke-opacity="0.71"/>
<line x1="357.29" y1="333" x2="444.28" y2="440" stroke="#2c2c2e" stroke-width="0.9" stroke-opacity="0.78"/>
<line x1="341.03" y1="281" x2="344.28" y2="283" stroke="#2c2c2e" stroke-width="0.9" stroke-opacity="0.27"/>
<line x1="344.28" y1="283" x2="348.35" y2="285.5" stroke="#2c2c2e" stroke-width="0.9" stroke-opacity="0.31"/>
<line x1="348.35" y1="285.5" x2="352.41" y2="288" stroke="#2c2c2e" stroke-width="0.9" stroke-opacity="0.35"/>
<line x1="352.41" y1="288" x2="360.54" y2="293" stroke="#2c2c2e" stroke-width="0.9" stroke-opacity="0.39"/>
<line x1="360.54" y1="293" x2="370.30" y2="299" stroke="#2c2c2e" stroke-width="0.9" stroke-opacity="0.45"/>
<line x1="370.30" y1="299" x2="381.68" y2="306" stroke="#2c2c2e" stroke-width="0.9" stroke-opacity="0.51"/>
<line x1="381.68" y1="306" x2="394.69" y2="314" stroke="#2c2c2e" stroke-width="0.9" stroke-opacity="0.58"/>
<line x1="394.69" y1="314" x2="409.32" y2="323" stroke="#2c2c2e" stroke-width="0.9" stroke-opacity="0.64"/>
<line x1="409.32" y1="323" x2="425.58" y2="333" stroke="#2c2c2e" stroke-width="0.9" stroke-opacity="0.71"/>
<line x1="425.58" y1="333" x2="599.57" y2="440" stroke="#2c2c2e" stroke-width="0.9" stroke-opacity="0.78"/>
<line x1="367.05" y1="281" x2="371.93" y2="283" stroke="#2c2c2e" stroke-width="0.9" stroke-opacity="0.27"/>
<line x1="371.93" y1="283" x2="378.02" y2="285.5" stroke="#2c2c2e" stroke-width="0.9" stroke-opacity="0.31"/>
<line x1="378.02" y1="285.5" x2="384.12" y2="288" stroke="#2c2c2e" stroke-width="0.9" stroke-opacity="0.35"/>
<line x1="384.12" y1="288" x2="396.32" y2="293" stroke="#2c2c2e" stroke-width="0.9" stroke-opacity="0.39"/>
<line x1="396.32" y1="293" x2="410.95" y2="299" stroke="#2c2c2e" stroke-width="0.9" stroke-opacity="0.45"/>
<line x1="410.95" y1="299" x2="428.02" y2="306" stroke="#2c2c2e" stroke-width="0.9" stroke-opacity="0.51"/>
<line x1="428.02" y1="306" x2="447.53" y2="314" stroke="#2c2c2e" stroke-width="0.9" stroke-opacity="0.58"/>
<line x1="447.53" y1="314" x2="469.49" y2="323" stroke="#2c2c2e" stroke-width="0.9" stroke-opacity="0.64"/>
<line x1="469.49" y1="323" x2="493.88" y2="333" stroke="#2c2c2e" stroke-width="0.9" stroke-opacity="0.71"/>
<line x1="493.88" y1="333" x2="754.85" y2="440" stroke="#2c2c2e" stroke-width="0.9" stroke-opacity="0.78"/>
<line x1="393.06" y1="281" x2="399.57" y2="283" stroke="#2c2c2e" stroke-width="0.9" stroke-opacity="0.27"/>
<line x1="399.57" y1="283" x2="407.70" y2="285.5" stroke="#2c2c2e" stroke-width="0.9" stroke-opacity="0.31"/>
<line x1="407.70" y1="285.5" x2="415.83" y2="288" stroke="#2c2c2e" stroke-width="0.9" stroke-opacity="0.35"/>
<line x1="415.83" y1="288" x2="432.09" y2="293" stroke="#2c2c2e" stroke-width="0.9" stroke-opacity="0.39"/>
<line x1="432.09" y1="293" x2="451.60" y2="299" stroke="#2c2c2e" stroke-width="0.9" stroke-opacity="0.45"/>
<line x1="451.60" y1="299" x2="474.36" y2="306" stroke="#2c2c2e" stroke-width="0.9" stroke-opacity="0.51"/>
<line x1="474.36" y1="306" x2="500.38" y2="314" stroke="#2c2c2e" stroke-width="0.9" stroke-opacity="0.58"/>
<line x1="500.38" y1="314" x2="529.65" y2="323" stroke="#2c2c2e" stroke-width="0.9" stroke-opacity="0.64"/>
<line x1="529.65" y1="323" x2="562.17" y2="333" stroke="#2c2c2e" stroke-width="0.9" stroke-opacity="0.71"/>
<line x1="562.17" y1="333" x2="910.13" y2="440" stroke="#2c2c2e" stroke-width="0.9" stroke-opacity="0.78"/>
<line x1="419.08" y1="281" x2="427.21" y2="283" stroke="#2c2c2e" stroke-width="0.9" stroke-opacity="0.27"/>
<line x1="427.21" y1="283" x2="437.37" y2="285.5" stroke="#2c2c2e" stroke-width="0.9" stroke-opacity="0.31"/>
<line x1="437.37" y1="285.5" x2="447.53" y2="288" stroke="#2c2c2e" stroke-width="0.9" stroke-opacity="0.35"/>
<line x1="447.53" y1="288" x2="467.86" y2="293" stroke="#2c2c2e" stroke-width="0.9" stroke-opacity="0.39"/>
<line x1="467.86" y1="293" x2="492.25" y2="299" stroke="#2c2c2e" stroke-width="0.9" stroke-opacity="0.45"/>
<line x1="492.25" y1="299" x2="520.70" y2="306" stroke="#2c2c2e" stroke-width="0.9" stroke-opacity="0.51"/>
<line x1="520.70" y1="306" x2="553.22" y2="314" stroke="#2c2c2e" stroke-width="0.9" stroke-opacity="0.58"/>
<line x1="553.22" y1="314" x2="589.81" y2="323" stroke="#2c2c2e" stroke-width="0.9" stroke-opacity="0.64"/>
<line x1="589.81" y1="323" x2="630.46" y2="333" stroke="#2c2c2e" stroke-width="0.9" stroke-opacity="0.71"/>
<line x1="630.46" y1="333" x2="1065.41" y2="440" stroke="#2c2c2e" stroke-width="0.9" stroke-opacity="0.78"/>
<line x1="445.10" y1="281" x2="454.85" y2="283" stroke="#2c2c2e" stroke-width="0.9" stroke-opacity="0.27"/>
<line x1="454.85" y1="283" x2="467.05" y2="285.5" stroke="#2c2c2e" stroke-width="0.9" stroke-opacity="0.31"/>
<line x1="467.05" y1="285.5" x2="479.24" y2="288" stroke="#2c2c2e" stroke-width="0.9" stroke-opacity="0.35"/>
<line x1="479.24" y1="288" x2="503.63" y2="293" stroke="#2c2c2e" stroke-width="0.9" stroke-opacity="0.39"/>
<line x1="503.63" y1="293" x2="532.90" y2="299" stroke="#2c2c2e" stroke-width="0.9" stroke-opacity="0.45"/>
<line x1="532.90" y1="299" x2="567.05" y2="306" stroke="#2c2c2e" stroke-width="0.9" stroke-opacity="0.51"/>
<line x1="567.05" y1="306" x2="606.07" y2="314" stroke="#2c2c2e" stroke-width="0.9" stroke-opacity="0.58"/>
<line x1="606.07" y1="314" x2="649.97" y2="323" stroke="#2c2c2e" stroke-width="0.9" stroke-opacity="0.64"/>
<line x1="649.97" y1="323" x2="698.75" y2="333" stroke="#2c2c2e" stroke-width="0.9" stroke-opacity="0.71"/>
<line x1="471.11" y1="281" x2="482.49" y2="283" stroke="#2c2c2e" stroke-width="0.9" stroke-opacity="0.27"/>
<line x1="482.49" y1="283" x2="496.72" y2="285.5" stroke="#2c2c2e" stroke-width="0.9" stroke-opacity="0.31"/>
<line x1="496.72" y1="285.5" x2="510.95" y2="288" stroke="#2c2c2e" stroke-width="0.9" stroke-opacity="0.35"/>
<line x1="510.95" y1="288" x2="539.40" y2="293" stroke="#2c2c2e" stroke-width="0.9" stroke-opacity="0.39"/>
<line x1="539.40" y1="293" x2="573.55" y2="299" stroke="#2c2c2e" stroke-width="0.9" stroke-opacity="0.45"/>
<line x1="573.55" y1="299" x2="613.39" y2="306" stroke="#2c2c2e" stroke-width="0.9" stroke-opacity="0.51"/>
<line x1="613.39" y1="306" x2="658.91" y2="314" stroke="#2c2c2e" stroke-width="0.9" stroke-opacity="0.58"/>
<line x1="658.91" y1="314" x2="710.13" y2="323" stroke="#2c2c2e" stroke-width="0.9" stroke-opacity="0.64"/>
<line x1="497.13" y1="281" x2="510.14" y2="283" stroke="#2c2c2e" stroke-width="0.9" stroke-opacity="0.27"/>
<line x1="510.14" y1="283" x2="526.40" y2="285.5" stroke="#2c2c2e" stroke-width="0.9" stroke-opacity="0.31"/>
<line x1="526.40" y1="285.5" x2="542.66" y2="288" stroke="#2c2c2e" stroke-width="0.9" stroke-opacity="0.35"/>
<line x1="542.66" y1="288" x2="575.18" y2="293" stroke="#2c2c2e" stroke-width="0.9" stroke-opacity="0.39"/>
<line x1="575.18" y1="293" x2="614.20" y2="299" stroke="#2c2c2e" stroke-width="0.9" stroke-opacity="0.45"/>
<line x1="614.20" y1="299" x2="659.73" y2="306" stroke="#2c2c2e" stroke-width="0.9" stroke-opacity="0.51"/>
<line x1="659.73" y1="306" x2="711.76" y2="314" stroke="#2c2c2e" stroke-width="0.9" stroke-opacity="0.58"/>
<line x1="523.14" y1="281" x2="537.78" y2="283" stroke="#2c2c2e" stroke-width="0.9" stroke-opacity="0.27"/>
<line x1="537.78" y1="283" x2="556.07" y2="285.5" stroke="#2c2c2e" stroke-width="0.9" stroke-opacity="0.31"/>
<line x1="556.07" y1="285.5" x2="574.36" y2="288" stroke="#2c2c2e" stroke-width="0.9" stroke-opacity="0.35"/>
<line x1="574.36" y1="288" x2="610.95" y2="293" stroke="#2c2c2e" stroke-width="0.9" stroke-opacity="0.39"/>
<line x1="610.95" y1="293" x2="654.85" y2="299" stroke="#2c2c2e" stroke-width="0.9" stroke-opacity="0.45"/>
<line x1="654.85" y1="299" x2="706.07" y2="306" stroke="#2c2c2e" stroke-width="0.9" stroke-opacity="0.51"/>
<line x1="549.16" y1="281" x2="565.42" y2="283" stroke="#2c2c2e" stroke-width="0.9" stroke-opacity="0.27"/>
<line x1="565.42" y1="283" x2="585.74" y2="285.5" stroke="#2c2c2e" stroke-width="0.9" stroke-opacity="0.31"/>
<line x1="585.74" y1="285.5" x2="606.07" y2="288" stroke="#2c2c2e" stroke-width="0.9" stroke-opacity="0.35"/>
<line x1="606.07" y1="288" x2="646.72" y2="293" stroke="#2c2c2e" stroke-width="0.9" stroke-opacity="0.39"/>
<line x1="646.72" y1="293" x2="695.50" y2="299" stroke="#2c2c2e" stroke-width="0.9" stroke-opacity="0.45"/>
<line x1="575.18" y1="281" x2="593.06" y2="283" stroke="#2c2c2e" stroke-width="0.9" stroke-opacity="0.27"/>
<line x1="593.06" y1="283" x2="615.42" y2="285.5" stroke="#2c2c2e" stroke-width="0.9" stroke-opacity="0.31"/>
<line x1="615.42" y1="285.5" x2="637.78" y2="288" stroke="#2c2c2e" stroke-width="0.9" stroke-opacity="0.35"/>
<line x1="637.78" y1="288" x2="682.49" y2="293" stroke="#2c2c2e" stroke-width="0.9" stroke-opacity="0.39"/>
<line x1="682.49" y1="293" x2="736.15" y2="299" stroke="#2c2c2e" stroke-width="0.9" stroke-opacity="0.45"/>
<line x1="601.19" y1="281" x2="620.70" y2="283" stroke="#2c2c2e" stroke-width="0.9" stroke-opacity="0.27"/>
<line x1="620.70" y1="283" x2="645.09" y2="285.5" stroke="#2c2c2e" stroke-width="0.9" stroke-opacity="0.31"/>
<line x1="645.09" y1="285.5" x2="669.48" y2="288" stroke="#2c2c2e" stroke-width="0.9" stroke-opacity="0.35"/>
<line x1="669.48" y1="288" x2="718.26" y2="293" stroke="#2c2c2e" stroke-width="0.9" stroke-opacity="0.39"/>
<line x1="627.21" y1="281" x2="648.35" y2="283" stroke="#2c2c2e" stroke-width="0.9" stroke-opacity="0.27"/>
<line x1="648.35" y1="283" x2="674.77" y2="285.5" stroke="#2c2c2e" stroke-width="0.9" stroke-opacity="0.31"/>
<line x1="674.77" y1="285.5" x2="701.19" y2="288" stroke="#2c2c2e" stroke-width="0.9" stroke-opacity="0.35"/>
<line x1="653.22" y1="281" x2="675.99" y2="283" stroke="#2c2c2e" stroke-width="0.9" stroke-opacity="0.27"/>
<line x1="675.99" y1="283" x2="704.44" y2="285.5" stroke="#2c2c2e" stroke-width="0.9" stroke-opacity="0.31"/>
<line x1="679.24" y1="281" x2="703.63" y2="283" stroke="#2c2c2e" stroke-width="0.9" stroke-opacity="0.27"/>
<rect x="0" y="351.4" width="695" height="1.8" fill="#e2552f"/>
<rect x="288" y="352" width="2" height="100" fill="#22429a"/>
</svg>
<div class="a" style="left:0;top:0;width:517.5px;height:369.0px;background:conic-gradient(from 0deg at 258.5px 80.0px,#2656a8 0deg,#2656a8 153.51deg,#2a5db0 153.92deg,#2c60b3 154.71deg,#2e61b5 155.86deg,#2f63b6 157.39deg,#3165b8 159.26deg,#3266b9 161.47deg,#3367ba 164.00deg,#3569bb 166.82deg,#3468ba 169.89deg,#3266ba 173.16deg,#3165b9 176.57deg,#3064b8 180.05deg,#2e62b7 183.53deg,#2d61b6 186.94deg,#2c60b6 190.21deg,#2b5fb5 193.28deg,#2a5eb4 196.09deg,#295cb2 198.62deg,#285bb1 200.83deg,#275ab0 202.70deg,#2658ae 204.22deg,#2557ad 205.38deg,#2254a8 206.17deg,#1f4ea0 206.58deg,#1f4ea0 360deg);clip-path:path('M258.50,80.00 L152.67,291.01 A105.9,15.2 0 1 0 363.93,291.01 Z');"></div>
</div>
<div class="a" style="left:23.8px;top:45.3px;width:123.60000000000001px;height:124.60000000000001px;background:#d5d7d9;overflow:hidden;box-shadow:0 0 0 0.6px #5a5a5c;">
<svg class="a" style="left:-23.8px;top:-45.3px;" width="695" height="476" viewBox="0 0 695 476">
<defs><clipPath id="cc"><circle cx="85" cy="111.8" r="46"/></clipPath>
<linearGradient id="shine" x1="0" y1="0" x2="1" y2="0"><stop offset="0" stop-color="#15306e"/><stop offset="0.35" stop-color="#1f55b4"/><stop offset="0.56" stop-color="#3a78d8"/><stop offset="0.7" stop-color="#2562c6"/><stop offset="1" stop-color="#1a4aa6"/></linearGradient>
<linearGradient id="darktop" x1="0" y1="0" x2="0" y2="1"><stop offset="0" stop-color="#2b2d35"/><stop offset="0.75" stop-color="#20232b"/><stop offset="1" stop-color="#1b2236"/></linearGradient>
</defs>
<rect x="23.8" y="45.3" width="123.60000000000001" height="8.3" fill="#6b6d6f"/>
<rect x="48.0" y="53.6" width="0.8" height="120" fill="#8e9092"/>
<rect x="121.0" y="53.6" width="0.8" height="120" fill="#8e9092"/>
<rect x="20" y="74.19999999999999" width="130" height="0.8" fill="#8e9092"/>
<rect x="20" y="148.2" width="130" height="0.8" fill="#8e9092"/>
<rect x="20" y="111.2" width="130" height="1.5" fill="#df6b4e"/>
<rect x="84.4" y="53.6" width="1.3" height="120" fill="#6f6fc4"/>
</svg>
<div class="a" style="left:15.2px;top:20.5px;width:92px;height:92px;border-radius:50%;background:conic-gradient(from 0deg at 50% 50%,#2a2c34 0deg,#23262e 60deg,#20232b 90deg,#1e2740 98deg,#1a3a7a 106deg,#1b4ea8 117deg,#1d58b8 135deg,#2060c4 160deg,#2c6ed2 173deg,#2163c7 182deg,#194fa8 215deg,#15408c 245deg,#13367a 262deg,#142e64 268deg,#1a2440 270deg,#22252d 270.6deg,#282a32 320deg,#2a2c34 360deg);"></div>
<div class="a" style="left:51.2px;top:14.900000000000006px;font-family:&quot;Liberation Mono&quot;,monospace;font-size:4.7px;color:#4c4e52;line-height:5px;will-change:transform;white-space:nowrap;">2.50&nbsp;in</div>
<div class="a" style="left:51.2px;top:113.50000000000001px;font-family:&quot;Liberation Mono&quot;,monospace;font-size:4.7px;color:#4c4e52;line-height:5px;will-change:transform;white-space:nowrap;">2.50&nbsp;in</div>
<div class="a" style="left:12.8px;top:64.0px;font-family:&quot;Liberation Mono&quot;,monospace;font-size:4.7px;color:#4c4e52;line-height:5px;will-change:transform;white-space:nowrap;transform:rotate(-90deg);transform-origin:center;width:20px;margin-left:-10px;text-align:center;">2.50&nbsp;in</div>
<div class="a" style="left:109.8px;top:64.0px;font-family:&quot;Liberation Mono&quot;,monospace;font-size:4.7px;color:#4c4e52;line-height:5px;will-change:transform;white-space:nowrap;transform:rotate(90deg);transform-origin:center;width:20px;margin-left:-10px;text-align:center;">2.50&nbsp;in</div>
<div class="a" style="left:2.8000000000000007px;top:1.7000000000000028px;width:1.2px;height:5px;background:repeating-linear-gradient(#d0d0d0 0 1px,transparent 1px 2px);"></div>
<div class="a" style="left:6.5px;top:2.3000000000000043px;width:0;height:0;border-left:2.6px solid #dcdcdc;border-top:1.8px solid transparent;border-bottom:1.8px solid transparent;"></div>
<div class="a" style="left:14.2px;top:1.1000000000000014px;width:6px;height:5.8px;background:#e4e4e4;border-radius:0.6px;"></div>
<div class="a" style="left:16.400000000000002px;top:1.9000000000000057px;width:1.6px;height:2.6px;background:#55575a;"></div>
<div class="a" style="left:23.499999999999996px;top:0.9000000000000057px;font-size:5px;line-height:6px;color:#a8a8aa;">&rsaquo;</div>
<div class="a" style="left:115.50000000000001px;top:1.0px;width:6px;height:6px;background:#d4d4d4;border-radius:0.5px;"></div>
<div class="a" style="left:116.50000000000001px;top:2.0px;width:4px;height:4px;background:linear-gradient(135deg,#55575a 0 30%,#d4d4d4 30% 55%,#55575a 55% 100%);"></div>
</div>
<div class="a" style="left:288px;top:431.5px;width:2px;height:18px;background:#213f90;"></div>
<svg class="a" style="left:0;top:0;" width="695" height="476" viewBox="0 0 695 476"><circle cx="313.7" cy="50.5" r="6.2" fill="#2a2a2c" fill-opacity="0.55"/><circle cx="313.7" cy="50.4" r="5.3" fill="#ffffff"/><path d="M312.6,48L312.6,52.6L313.7,51.7L314.5,53.4L315.2,53.1L314.4,51.5L315.8,51.3Z" fill="#2a2a2c"/><rect x="315.4" y="52.4" width="1.6" height="1.6" fill="#8a8a8c"/><g stroke="#3a3a3c" stroke-width="0.6" fill="none"><rect x="35.4" y="392" width="4.6" height="4.4" rx="0.6" fill="#e8e8e8"/><path d="M36.6,393.2H39.2V395.4H37.6V394.2H38.6" stroke-width="0.5"/></g><path d="M60.8,391.4L61.4,393.6L61.8,396.8H59.8L60.2,393.6Z" fill="#1c1c1e"/><path d="M43.9,419.3V401.6" stroke="#6cb486" stroke-width="0.8"/><path d="M43.2,402.4L43.9,400.4L44.6,402.4Z" fill="#6cb486"/><path d="M43.9,419.3H61" stroke="#a44a58" stroke-width="0.8"/><path d="M60.6,418.5L62.9,419.3L60.6,420.1Z" fill="#8a3a48"/><rect x="43" y="418.4" width="1.9" height="1.9" fill="#2a5a5c"/></svg>
<div class="a" style="left:21px;top:451px;width:545px;height:9.5px;background:#606264;"></div>
<div class="a" style="left:21.5px;top:452px;width:28px;height:7.6px;background:#646466;"></div>
<div class="a" style="left:50px;top:452px;width:85px;height:7.6px;background:#646466;"></div>
<div class="t" style="left:31.00px;top:451.70px;font-size:5.6px;color:#b6b6b6;transform:scaleX(0.8922);transform-origin:0 50%;">50%</div>
<div class="t" style="left:71.40px;top:451.70px;font-size:5.6px;color:#b6b6b6;transform:scaleX(0.9241);transform-origin:0 50%;">Doc: 9.01M/11.7M</div>
<div class="t" style="left:136.8px;top:451.5px;font-size:5.6px;color:#c8c8c8;">&rsaquo;</div>
<div class="a" style="left:0;top:460.4px;width:566px;height:15.6px;background:#545456;"></div>
<div class="a" style="left:21.2px;top:460.4px;width:30px;height:14.2px;background:#616163;"></div>
<div class="a" style="left:0;top:474.0px;width:695px;height:0.7px;background:#4a4a4c;"></div>
<div class="t" style="left:25.30px;top:463.50px;font-size:6.1px;color:#e0e0e0;font-weight:bold;transform:scaleX(0.8890);transform-origin:0 50%;">Timeline</div>
<div class="a" style="left:557px;top:28.8px;width:138px;height:448px;background:#5f5f62;"></div>
<div class="a" style="left:557px;top:28.8px;width:138px;height:6.2px;background:#525256;"></div>
<div class="a" style="left:566.6px;top:35px;width:18.6px;height:441px;background:#5e5e61;box-shadow:inset 0.5px 0 0 #505052,inset -0.5px 0 0 #505052;"></div>
<div class="a" style="left:586.5px;top:35px;width:108.5px;height:441px;background:#606264;"></div>
<div class="a" style="left:586.5px;top:35px;width:108.5px;height:13.5px;background:#545456;"></div>
<div class="a" style="left:586.5px;top:35px;width:35px;height:13.5px;background:#606264;"></div>
<div class="t" style="left:591.00px;top:37.60px;font-size:6.1px;color:#ececec;font-weight:bold;transform:scaleX(0.8385);transform-origin:0 50%;">Properties</div>
<svg class="a" style="left:0;top:0;" width="695" height="476" viewBox="0 0 695 476"><path d="M686.4,39.8H690.2M686.4,41.2H690.2M686.4,42.6H690.2" stroke="#a8a8a8" stroke-width="0.6"/><path d="M688,31L689,32L688,33M689.8,31L690.8,32L689.8,33" stroke="#8a8a8a" stroke-width="0.45" fill="none"/><path d="M578.6,31L579.6,32L578.6,33M580.4,31L581.4,32L580.4,33" stroke="#8a8a8a" stroke-width="0.45" fill="none"/><rect x="591.8" y="52.2" width="9.6" height="9.8" rx="0.8" fill="#434345"/><g stroke="#e0e0e0" stroke-width="0.7" fill="none"><path d="M594.2,54.2V60M594.2,55.2H596.2M594.2,57.4H596.2M594.2,59.6H596.2"/><path d="M597.2,54.6H599.4M597.2,57.4H599.4M597.2,59.6H599.4" stroke-width="1.1"/></g><g fill="#e4e4e4"><rect x="604.2" y="56.2" width="6.8" height="3.6" rx="0.6"/><rect x="605.2" y="54.2" width="4" height="1.4"/><rect x="605.4" y="59.2" width="4.4" height="2" fill="#e4e4e4" stroke="#535355" stroke-width="0.4"/><rect x="610.4" y="53" width="1.6" height="1.6"/></g><g stroke="#d0d0d0" stroke-width="0.6" fill="none"><path d="M620.8,53.6L617.6,60.4H624L620.8,53.6ZM620.8,53.6V60.4M618.8,58H622.8"/></g><rect x="612.8" y="66.8" width="71.4" height="7.8" rx="0.8" fill="#4e5052" stroke="#58585a" stroke-width="0.4"/><path d="M679.3000000000001,70.2L680.6,71.5L681.9,70.2" stroke="#c8c8c8" stroke-width="0.6" fill="none" stroke-linecap="round"/><rect x="588" y="78.2" width="104" height="0.5" fill="#555759"/><rect x="588" y="113" width="104" height="0.5" fill="#555759"/><rect x="588" y="147.4" width="104" height="0.5" fill="#555759"/><rect x="588" y="171.6" width="104" height="0.5" fill="#555759"/><rect x="588.4000000000001" y="81.10000000000001" width="4.6" height="4.6" rx="0.7" fill="#56585a" stroke="#8e8e90" stroke-width="0.5"/><rect x="588.2" y="91.5" width="5" height="5" rx="0.8" fill="#e8e8e8"/><path d="M589.3000000000001,94L590.3000000000001,95.1L592.2,92.8" stroke="#3c3c3e" stroke-width="0.85" fill="none"/><rect x="646.4" y="92" width="37.2" height="7.6" rx="0.8" fill="#4e5052" stroke="#58585a" stroke-width="0.4"/><path d="M678.7,95.4L680,96.7L681.3,95.4" stroke="#c8c8c8" stroke-width="0.6" fill="none" stroke-linecap="round"/><rect x="597" y="100.8" width="12.6" height="7.8" fill="#5e6062" stroke="#6e7072" stroke-width="0.5"/><rect x="646.4" y="101.8" width="37.2" height="7.4" rx="0.8" fill="#5d5f61" stroke="#6c6e70" stroke-width="0.4"/><path d="M678.7,105.0L680,106.3L681.3,105.0" stroke="#6e6e70" stroke-width="0.6" fill="none" stroke-linecap="round"/><rect x="588.4000000000001" y="115.8" width="4.6" height="4.6" rx="0.7" fill="#56585a" stroke="#8e8e90" stroke-width="0.5"/><rect x="646.4" y="116" width="37.2" height="7.2" rx="0.8" fill="#5d5f61" stroke="#6c6e70" stroke-width="0.4"/><path d="M678.7,119.2L680,120.5L681.3,119.2" stroke="#6e6e70" stroke-width="0.6" fill="none" stroke-linecap="round"/><rect x="596.2" y="124.2" width="13.8" height="10" fill="#5e6062" stroke="#6e7072" stroke-width="0.5"/><rect x="653.6" y="126" width="30" height="7" rx="0.8" fill="#5d5f61" stroke="#6c6e70" stroke-width="0.4"/><path d="M678.7,129.0L680,130.29999999999998L681.3,129.0" stroke="#6e6e70" stroke-width="0.6" fill="none" stroke-linecap="round"/><rect x="653.6" y="136.8" width="30" height="7" rx="0.8" fill="#5d5f61" stroke="#6c6e70" stroke-width="0.4"/><path d="M678.7,139.8L680,141.1L681.3,139.8" stroke="#6e6e70" stroke-width="0.6" fill="none" stroke-linecap="round"/><rect x="588.4000000000001" y="151.7" width="4.6" height="4.6" rx="0.7" fill="#56585a" stroke="#8e8e90" stroke-width="0.5"/><rect x="646.4" y="151.4" width="37.2" height="7.2" rx="0.8" fill="#5d5f61" stroke="#6c6e70" stroke-width="0.4"/><path d="M678.7,154.6L680,155.89999999999998L681.3,154.6" stroke="#6e6e70" stroke-width="0.6" fill="none" stroke-linecap="round"/><rect x="596.2" y="160" width="13.8" height="8.6" fill="#5e6062" stroke="#6e7072" stroke-width="0.5"/><rect x="653.6" y="162" width="30" height="7" rx="0.8" fill="#5d5f61" stroke="#6c6e70" stroke-width="0.4"/><path d="M678.7,165.0L680,166.29999999999998L681.3,165.0" stroke="#6e6e70" stroke-width="0.6" fill="none" stroke-linecap="round"/><rect x="588.4000000000001" y="175.29999999999998" width="4.6" height="4.6" rx="0.7" fill="#56585a" stroke="#8e8e90" stroke-width="0.5"/><rect x="654.1" y="175.1" width="5" height="5" rx="0.8" fill="#e8e8e8"/><path d="M655.2,177.6L656.2,178.7L658.1,176.4" stroke="#3c3c3e" stroke-width="0.85" fill="none"/><rect x="588.4000000000001" y="192.5" width="4.6" height="4.6" rx="0.7" fill="#56585a" stroke="#8e8e90" stroke-width="0.5"/><rect x="663.2" y="192.3" width="5" height="5" rx="0.8" fill="#e8e8e8"/><path d="M664.3000000000001,194.8L665.3000000000001,195.9L667.2,193.60000000000002" stroke="#3c3c3e" stroke-width="0.85" fill="none"/><rect x="586.5" y="461.8" width="108" height="0.6" fill="#56585a"/><rect x="659.4" y="466" width="5.6" height="5.6" rx="0.6" fill="#bdbdbf"/><path d="M660.6,470.6L662.2,467.4L663.8,470.6Z" fill="#535355"/><g stroke="#7a7a7c" stroke-width="0.6" fill="none"><path d="M674.4,467.2H678.4M675,467.2V471.4H677.8V467.2M675.8,466.4H677"/></g><rect x="557.6" y="465.6" width="3.6" height="3.6" fill="#7c7c7e"/></svg>
<div class="t" style="left:629.00px;top:53.10px;font-size:5.9px;color:#d6d6d6;font-weight:bold;transform:scaleX(0.8053);transform-origin:0 50%;">Scene</div>
<div class="t" style="left:588.20px;top:66.40px;font-size:5.9px;color:#bcbcbc;font-weight:bold;transform:scaleX(0.7901);transform-origin:0 50%;">Presets:</div>
<div class="t" style="left:615.80px;top:66.50px;font-size:5.9px;color:#e6e6e6;font-weight:bold;transform:scaleX(0.8196);transform-origin:0 50%;">Custom</div>
<div class="t" style="left:595.40px;top:79.40px;font-size:5.9px;color:#e6e6e6;font-weight:bold;transform:scaleX(0.8217);transform-origin:0 50%;">Cross Section</div>
<div class="t" style="left:595.40px;top:90.00px;font-size:5.9px;color:#e6e6e6;font-weight:bold;transform:scaleX(0.8039);transform-origin:0 50%;">Surface</div>
<div class="t" style="left:629.30px;top:92.00px;font-size:5.9px;color:#bcbcbc;font-weight:bold;transform:scaleX(0.8278);transform-origin:0 50%;">Style:</div>
<div class="t" style="left:649.40px;top:92.00px;font-size:5.9px;color:#e6e6e6;font-weight:bold;transform:scaleX(0.7766);transform-origin:0 50%;">Solid</div>
<div class="t" style="left:624.10px;top:101.70px;font-size:5.9px;color:#bcbcbc;font-weight:bold;transform:scaleX(0.8100);transform-origin:0 50%;">Texture:</div>
<div class="t" style="left:649.40px;top:101.70px;font-size:5.9px;color:#808284;transform:scaleX(0.8478);transform-origin:0 50%;">Not Availa...</div>
<div class="t" style="left:595.10px;top:114.10px;font-size:5.9px;color:#e6e6e6;font-weight:bold;transform:scaleX(0.8501);transform-origin:0 50%;">Lines</div>
<div class="t" style="left:629.40px;top:115.70px;font-size:5.9px;color:#808284;transform:scaleX(0.7929);transform-origin:0 50%;">Style:</div>
<div class="t" style="left:649.20px;top:115.70px;font-size:5.9px;color:#808284;transform:scaleX(0.8723);transform-origin:0 50%;">Constant</div>
<div class="t" style="left:633.40px;top:125.80px;font-size:5.9px;color:#808284;transform:scaleX(0.8493);transform-origin:0 50%;">Width:</div>
<div class="t" style="left:608.80px;top:136.30px;font-size:5.9px;color:#808284;transform:scaleX(0.8944);transform-origin:0 50%;">Angle Threshold:</div>
<div class="t" style="left:595.10px;top:150.00px;font-size:5.9px;color:#e6e6e6;font-weight:bold;transform:scaleX(0.8375);transform-origin:0 50%;">Points</div>
<div class="t" style="left:629.40px;top:151.40px;font-size:5.9px;color:#808284;transform:scaleX(0.7929);transform-origin:0 50%;">Style:</div>
<div class="t" style="left:649.20px;top:151.40px;font-size:5.9px;color:#808284;transform:scaleX(0.8723);transform-origin:0 50%;">Constant</div>
<div class="t" style="left:631.40px;top:161.50px;font-size:5.9px;color:#808284;transform:scaleX(0.8098);transform-origin:0 50%;">Radius:</div>
<div class="t" style="left:595.10px;top:173.60px;font-size:5.9px;color:#e6e6e6;font-weight:bold;transform:scaleX(0.8344);transform-origin:0 50%;">Linearize Colors</div>
<div class="t" style="left:661.70px;top:173.60px;font-size:5.9px;color:#e6e6e6;font-weight:bold;transform:scaleX(0.8340);transform-origin:0 50%;">Shadows</div>
<div class="t" style="left:588.60px;top:181.80px;font-size:5.9px;color:#bcbcbc;font-weight:bold;transform:scaleX(0.8120);transform-origin:0 50%;">Remove Hidden:</div>
<div class="t" style="left:595.10px;top:190.80px;font-size:5.9px;color:#e6e6e6;font-weight:bold;transform:scaleX(0.8289);transform-origin:0 50%;">Backfaces</div>
<div class="t" style="left:670.80px;top:190.80px;font-size:5.9px;color:#e6e6e6;font-weight:bold;transform:scaleX(0.8112);transform-origin:0 50%;">Lines</div>
<svg class="a" style="left:0;top:0;" width="695" height="476" viewBox="0 0 695 476"><rect x="568.5" y="54.8" width="15.5" height="0.5" fill="#4e4e50"/><rect x="568.5" y="89.8" width="15.5" height="0.5" fill="#4e4e50"/><rect x="568.5" y="110.5" width="15.5" height="0.5" fill="#4e4e50"/><rect x="568.5" y="144.4" width="15.5" height="0.5" fill="#4e4e50"/><rect x="568.5" y="164.8" width="15.5" height="0.5" fill="#4e4e50"/><rect x="568.5" y="186" width="15.5" height="0.5" fill="#4e4e50"/><g transform="translate(576,45.8)" fill="none" stroke="#d8d8d8" stroke-width="0.8" stroke-linecap="round" stroke-linejoin="round"><rect x="-3.2" y="-3.2" width="1.8" height="5" fill="#d8d8d8" stroke="none"/><rect x="-3.2" y="2.4" width="1.8" height="1.4" fill="#d8d8d8" stroke="none"/><path d="M0.2,-3.2C3,-2.8 3.4,0.6 1,2.4" stroke-width="0.9"/><path d="M0.2,2.8L1.6,1.2L2.4,3Z" fill="#d8d8d8" stroke-width="0.2"/></g><g transform="translate(575.6,66)" fill="none" stroke="#d8d8d8" stroke-width="0.8" stroke-linecap="round" stroke-linejoin="round"><path d="M-0.4,0.6L3.4,-3.2" stroke-width="1.5"/><path d="M-2.8,3.2C-1.6,3.2 -0.6,2.4 -0.8,1.2C-1.6,0.6 -2.4,1.2 -2.8,3.2Z" fill="#d8d8d8" stroke-width="0.3"/><path d="M-3.6,-3.4H-1.6M-3.6,-2H-1.6M-3.6,-0.6H-2.4" stroke-width="0.5"/></g><g transform="translate(575.6,79.5)" fill="none" stroke="#d8d8d8" stroke-width="0.8" stroke-linecap="round" stroke-linejoin="round"><path d="M-3.6,-1.6H3.6M-3.6,1.6H3.6" stroke-width="0.7"/><rect x="-2.4" y="-2.8" width="1.6" height="2.4" fill="#d8d8d8" stroke="none"/><rect x="1.2" y="0.4" width="2" height="2.4" fill="#d8d8d8" stroke="none"/></g><g transform="translate(575.6,100.1)" fill="none" stroke="#d8d8d8" stroke-width="0.8" stroke-linecap="round" stroke-linejoin="round"><path d="M-3.8,-3.2H-2.2M-3.8,-1.8H-2.2M-3.8,-0.4H-2.8" stroke-width="0.5"/><path d="M-1.2,3.4H3.6" stroke-width="0.9"/><path d="M-1,2H3.4V1H2V0C2.6,-0.6 2.6,-2.4 1.2,-2.4C-0.2,-2.4 -0.2,-0.6 0.4,0V1H-1Z" fill="#d8d8d8" stroke-width="0.3"/></g><g transform="translate(575.4,121)" fill="none" stroke="#d8d8d8" stroke-width="0.8" stroke-linecap="round" stroke-linejoin="round"><path d="M-3.4,3L-1,-3.2L1.4,3M-2.5,0.8H0.5" stroke-width="0.8"/><path d="M3.2,-3.6V3.4" stroke-width="0.6"/></g><g transform="translate(575.6,134)" fill="none" stroke="#d8d8d8" stroke-width="0.8" stroke-linecap="round" stroke-linejoin="round"><path d="M1.8,-2.8V3M0,-2.8V3M2.6,-2.8H-0.2" stroke-width="0.7"/><path d="M0,-2.8C-2.6,-2.8 -2.6,0.4 0,0.4Z" fill="#d8d8d8" stroke-width="0.3"/></g><g transform="translate(575.6,154.7)" fill="none" stroke="#d8d8d8" stroke-width="0.8" stroke-linecap="round" stroke-linejoin="round"><path d="M-3.2,-3L3,3.2M3,-3L-3.2,3.2" stroke-width="1.2"/><circle cx="-3" cy="-2.8" r="0.9" fill="#d8d8d8" stroke="none"/><circle cx="3" cy="-2.8" r="0.9" fill="#d8d8d8" stroke="none"/></g><g transform="translate(575.6,174.9)" fill="none" stroke="#d8d8d8" stroke-width="0.8" stroke-linecap="round" stroke-linejoin="round"><ellipse cx="0" cy="0" rx="4" ry="2.9" fill="#c2c2c4" stroke="#cacaca" stroke-width="0.5"/><path d="M-1.6,0.4C-1.6,-1.2 0.4,-1.4 0.8,-0.2C2,-0.4 2.2,1.2 1,1.2H-1C-1.8,1.2 -2,0.6 -1.6,0.4Z" fill="#77777a" stroke="none"/></g></svg>
<div class="a" style="left:0;top:0;width:1px;height:476px;background:#969a9e;"></div>
<div class="a" style="left:1px;top:1px;width:0.8px;height:474px;background:#505254;"></div>
<div class="a" style="left:693.8px;top:0;width:1.2px;height:476px;background:#d8d8da;"></div>
<div class="a" style="left:0;top:474.7px;width:695px;height:1.3px;background:#dededf;"></div>
<div class="a" style="left:0;top:0;width:2.4px;height:2px;background:radial-gradient(circle at 100% 100%,rgba(0,0,0,0) 1.6px,#d4d6d8 2.4px);"></div>
</body></html>
